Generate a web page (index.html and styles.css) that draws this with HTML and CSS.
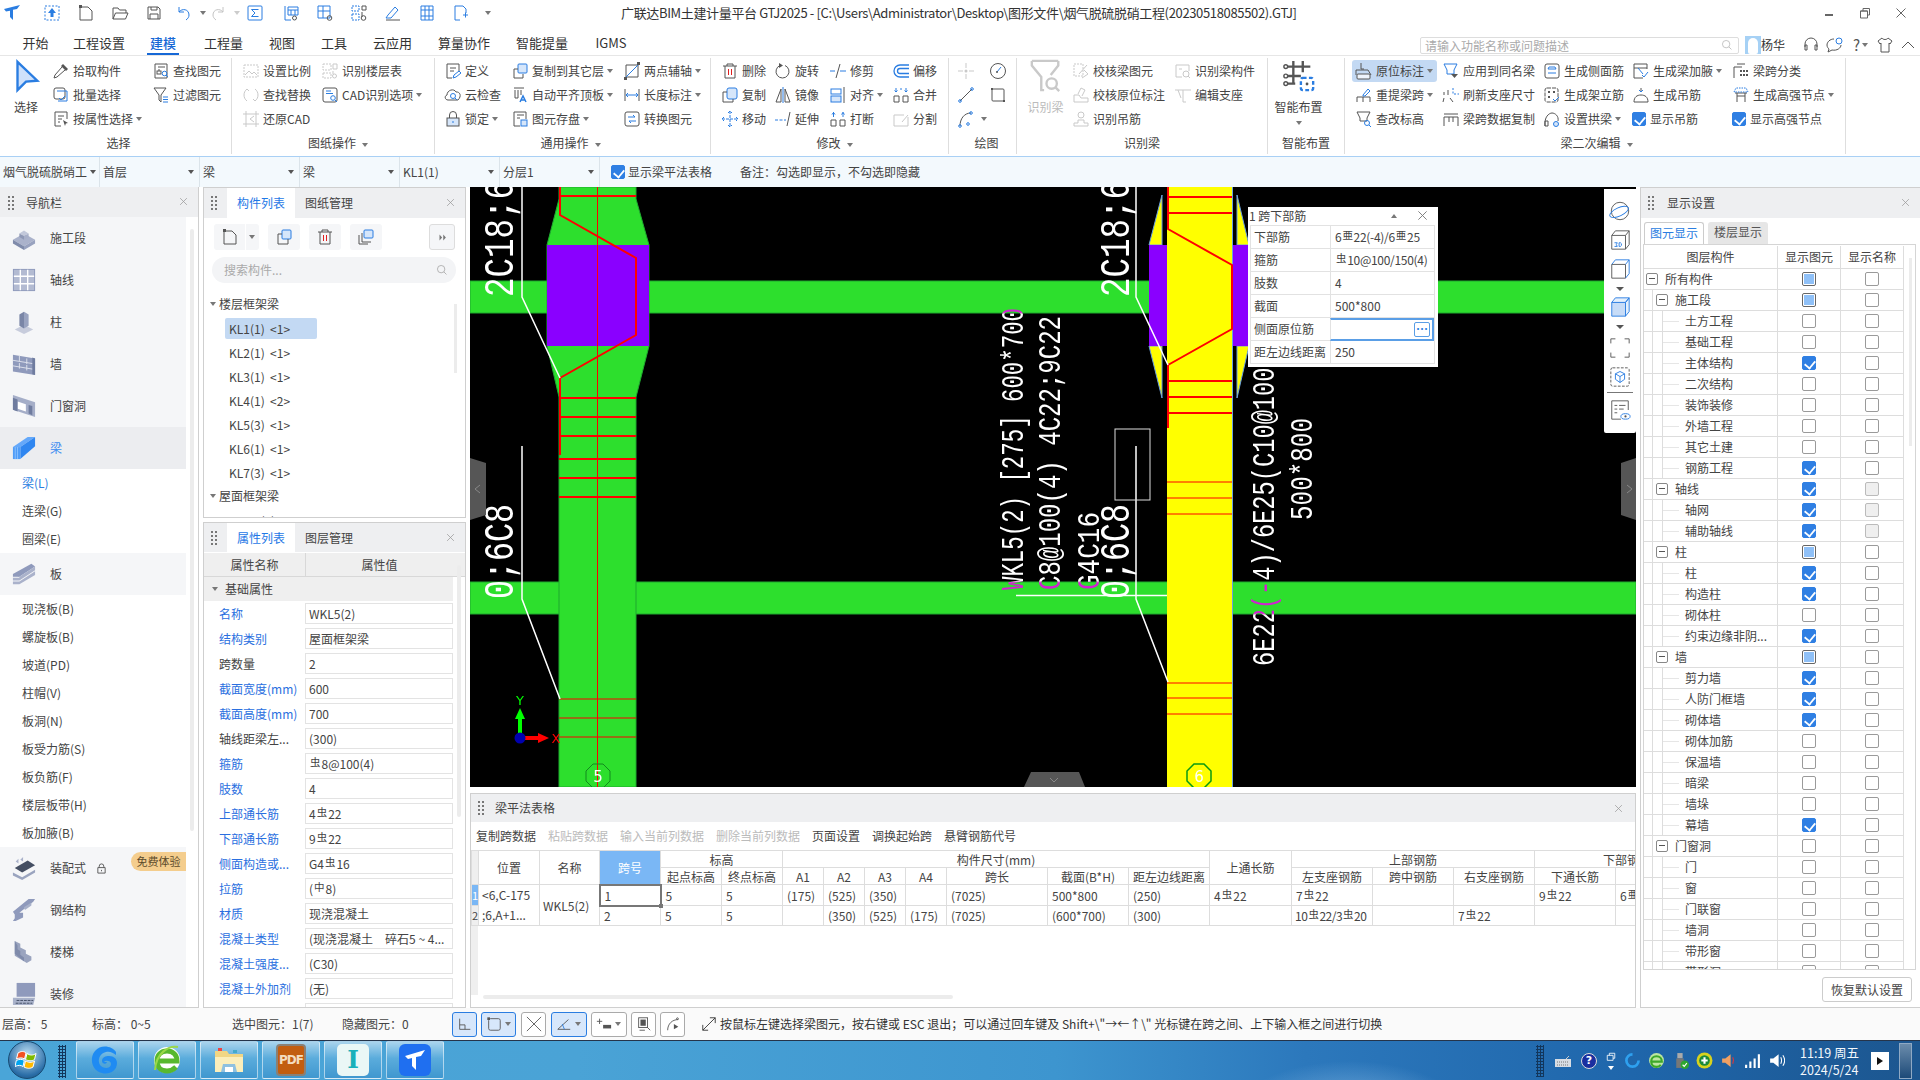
FILE: index.html
```html
<!DOCTYPE html>
<html lang="zh-CN">
<head>
<meta charset="utf-8">
<title>GTJ2025</title>
<link rel="stylesheet" href="styles.css">
</head>
<body>
<svg class="defs" width="0" height="0">
  <defs>
    <symbol id="x-close" viewBox="0 0 12 12"><path d="M1.5 1.5l9 9M10.5 1.5l-9 9"/></symbol>
    <symbol id="grip" viewBox="0 0 8 14"><path class="f" d="M1 0h2v2H1zM5 0h2v2H5zM1 4h2v2H1zM5 4h2v2H5zM1 8h2v2H1zM5 8h2v2H5zM1 12h2v2H1zM5 12h2v2H5z"/></symbol>
    <symbol id="mag" viewBox="0 0 14 14"><circle cx="6" cy="6" r="4.3"/><path d="M9.2 9.2l3 3"/></symbol>
    <symbol id="logo" viewBox="0 0 18 18"><path class="f" d="M1 5L17 1l-3 4-4 .7L10 16l-3-3V6.8L3 7.5z"/></symbol>
    <symbol id="imp" viewBox="0 0 18 18"><rect x="2" y="2" width="14" height="14" stroke-dasharray="2 1.5"/><path class="f" d="M9 4l4 5h-2.500v4h-3V9H5z"/></symbol>
    <symbol id="new" viewBox="0 0 18 18"><path stroke="#555" d="M3 3h8l4 4v9H3z"/><path class="f" fill="#2a7de1" stroke="none" d="M2 1h3v3H2z"/></symbol>
    <symbol id="open" viewBox="0 0 18 18"><path d="M2 15V4h5l1.500 2H15v3M2 15l2.500-6H17l-2.500 6z"/></symbol>
    <symbol id="save" viewBox="0 0 18 18"><path d="M3 3h10l2 2v10H3zM6 3v3h6V3M5 15v-5h8v5"/></symbol>
    <symbol id="undo" viewBox="0 0 18 18"><path d="M4 3v5h5M4 8c3-4 10-3 10 3 0 2-1 3.500-3 5"/></symbol>
    <symbol id="redo" viewBox="0 0 18 18"><path d="M14 3v5H9M14 8c-3-4-10-3-10 3 0 2 1 3.500 3 5"/></symbol>
    <symbol id="sigma" viewBox="0 0 18 18"><rect x="2" y="2" width="14" height="14" rx="1"/><path d="M12.500 5.500h-7L9 9l-3.500 3.500h7"/></symbol>
    <symbol id="tq" viewBox="0 0 18 18"><path stroke="#2a7de1" d="M3 2v14h6M6 3h10v8H6zM6 6h10M9 6v5M13 6v5"/><circle cx="12.500" cy="14" r="2" stroke="#555"/></symbol>
    <symbol id="gq" viewBox="0 0 18 18"><path stroke="#2a7de1" d="M2 2h12v12H2zM2 7h12M7 2v12"/><circle cx="13.500" cy="14" r="2.300" stroke="#555"/></symbol>
    <symbol id="gq2" viewBox="0 0 18 18"><path stroke="#2a7de1" stroke-dasharray="2 1" d="M2 2h7v5H2zM2 10h7v6H2z"/><path stroke="#555" d="M12 2h4v4h-4zM12 8v5"/><circle cx="13.500" cy="14" r="2.300" stroke="#555"/></symbol>
    <symbol id="pen" viewBox="0 0 18 18"><path stroke="#2a7de1" d="M4 11l7-8 3 3-7 8H2z"/><path stroke="#555" d="M2 16h14"/></symbol>
    <symbol id="film" viewBox="0 0 18 18"><path d="M3 2v14M15 2v14M3 6h12M3 12h12M7 2v14M11 2v14M3 2h12M3 16h12"/></symbol>
    <symbol id="crop" viewBox="0 0 18 18"><path stroke="#2a7de1" d="M3 2h8l3 3v4M3 2v14h5M11 11h5M13.500 8.500v5"/></symbol>
    <symbol id="pick" viewBox="0 0 18 18"><path class="f" fill="#555" stroke="none" d="M11 2l5 5-2 2-5-5z"/><path stroke="#555" d="M10 5l-7 8-1 3 3-1 8-7"/></symbol>
    <symbol id="batch" viewBox="0 0 18 18"><rect x="2" y="2" width="11" height="11" rx="2" stroke="#555"/><path stroke="#2a7de1" d="M5 5h10v10H6M7 12l2 2 4-4"/></symbol>
    <symbol id="psel" viewBox="0 0 18 18"><path stroke="#555" d="M15 9V2H3v14h6M6 6h6M6 9h4M6 12h2"/><path class="f" fill="#2a7de1" stroke="none" d="M11 10l5 3-2.200.6L13 16z"/></symbol>
    <symbol id="find" viewBox="0 0 18 18"><path stroke="#555" d="M3 2h12v14H3zM6 5h7M6 8h2"/><rect x="5" y="9" width="4" height="3" stroke="#555"/><circle cx="12.500" cy="11.500" r="2.300" stroke="#2a7de1"/><path stroke="#2a7de1" d="M14 13l2 2"/></symbol>
    <symbol id="filt" viewBox="0 0 18 18"><path stroke="#555" d="M2 2h12L9 9v7l-2-2V9z"/><path stroke="#2a7de1" d="M11 11h5M11 13.500h5M11 16h5"/></symbol>
    <symbol id="frame" viewBox="0 0 18 18"><path stroke-dasharray="2 1" d="M2 3h14v12H2z"/><path d="M3 13l4-4 3 3 2-2 3 3"/></symbol>
    <symbol id="ftb" viewBox="0 0 18 18"><path stroke-dasharray="2 1" d="M2 2h8v6H2zM2 11h8v5H2z"/><path d="M12 2h4v5h-4zM12 9v3"/><circle cx="13.500" cy="14" r="2"/></symbol>
    <symbol id="rep" viewBox="0 0 18 18"><path d="M5 3C1 6 1 12 5 15M13 3c4 3 4 9 0 12M5 3l2 2M13 15l-2-2"/></symbol>
    <symbol id="cad" viewBox="0 0 18 18"><rect x="2" y="2" width="14" height="14" rx="2" stroke="#555"/><path stroke="#2a7de1" d="M5 5h5M5 7.500h7"/><circle cx="12" cy="12" r="2.300" stroke="#2a7de1"/><path stroke="#2a7de1" d="M14 14l2 2"/></symbol>
    <symbol id="rest" viewBox="0 0 18 18"><path d="M4 1v16M14 1v16M1 4h16M1 14h16M12 6l-4 3 4 3"/></symbol>
    <symbol id="def" viewBox="0 0 18 18"><path stroke="#555" d="M3 2h12v8M3 2v14h5M6 6h6M6 9h4"/><path stroke="#2a7de1" d="M9 16l1-3 5-4 2 2-5 4z"/></symbol>
    <symbol id="cloud" viewBox="0 0 18 18"><path stroke="#555" d="M4 14c-3 0-4-4-1-5 0-5 7-7 9-3 4-.5 6 4 2 8z"/><circle cx="9" cy="10" r="2.500" stroke="#2a7de1"/><path stroke="#2a7de1" d="M11 12l2 2"/></symbol>
    <symbol id="lock" viewBox="0 0 18 18"><path stroke="#555" d="M5.500 8V5a3.500 3.500 0 017 0v3"/><rect x="3" y="8" width="12" height="8" stroke="#555" fill="#d6e6fa"/><path stroke="#2a7de1" d="M9 11v2"/></symbol>
    <symbol id="copy2" viewBox="0 0 18 18"><rect x="7" y="2" width="9" height="9" rx="1" stroke="#2a7de1" fill="#d6e6fa"/><path stroke="#555" d="M7 7H3v9h9v-4"/></symbol>
    <symbol id="atop" viewBox="0 0 18 18"><path stroke="#555" d="M3 2h10M4 4v8h3V4M10 4v5"/><path stroke="#2a7de1" stroke-width="1.500" d="M9 16l3-6 3 6M10 14h4"/></symbol>
    <symbol id="store" viewBox="0 0 18 18"><path stroke="#555" d="M3 2h12v7M3 2v14h6M6 5h7M6 8h3"/><rect x="10" y="10" width="6" height="6" stroke="#2a7de1" fill="#d6e6fa"/></symbol>
    <symbol id="two" viewBox="0 0 18 18"><path stroke="#555" d="M3 3h12v12H3z"/><path stroke="#2a7de1" d="M2 16L16 2"/><path class="f" fill="#2a7de1" stroke="none" d="M1 15h3v3H1zM14 0h3v3h-3z"/></symbol>
    <symbol id="dim" viewBox="0 0 18 18"><path stroke="#555" d="M2 3v12M16 3v12"/><path stroke="#2a7de1" d="M3 9h12M5 7L3 9l2 2M13 7l2 2-2 2"/></symbol>
    <symbol id="conv" viewBox="0 0 18 18"><rect x="2" y="2" width="14" height="14" rx="2" stroke="#555"/><path stroke="#2a7de1" d="M5 7h7l-2-2M13 11H6l2 2"/></symbol>
    <symbol id="del" viewBox="0 0 18 18"><path stroke="#555" d="M2 4h14M6 4V2h6v2M4 4v12h10V4"/><path stroke="#e02020" d="M7.500 7v6M10.500 7v6"/></symbol>
    <symbol id="rot" viewBox="0 0 18 18"><path stroke="#555" d="M11 3.500a6.500 6.500 0 11-5 0"/><path class="f" fill="#2a7de1" stroke="none" d="M5 1l4 2.500-4 2.500z"/></symbol>
    <symbol id="trim" viewBox="0 0 18 18"><path stroke="#2a7de1" d="M1 9h5M11 9h6"/><path stroke="#555" d="M11 2L7 16"/></symbol>
    <symbol id="off" viewBox="0 0 18 18"><path stroke="#2a7de1" stroke-width="1.300" d="M17 3H8a6 6 0 000 12h9M17 6.500H8a2.500 2.500 0 000 5h9"/></symbol>
    <symbol id="copy" viewBox="0 0 18 18"><rect x="6" y="2" width="10" height="11" rx="2" stroke="#2a7de1" fill="#d6e6fa"/><path stroke="#555" d="M6 6H2v10h10v-3"/></symbol>
    <symbol id="mir" viewBox="0 0 18 18"><path stroke="#555" d="M7 3L2 16h5zM11 3l5 13h-5z"/><path stroke="#2a7de1" d="M9 1v16"/></symbol>
    <symbol id="ali" viewBox="0 0 18 18"><rect x="2" y="3" width="10" height="5" stroke="#2a7de1"/><rect x="2" y="10" width="10" height="6" stroke="#2a7de1" fill="#d6e6fa"/><path stroke="#555" d="M15 1v16"/></symbol>
    <symbol id="merge" viewBox="0 0 18 18"><path stroke="#555" d="M2 10h5v6H2zM11 10h5v6h-5z"/><path stroke="#2a7de1" d="M4 2v4M4 6L2.500 4.500M4 6l1.500-1.500M14 2v4M14 6l-1.500-1.500M14 6l1.500-1.500M9 2v2"/></symbol>
    <symbol id="move" viewBox="0 0 18 18"><path stroke="#2a7de1" d="M9 1v16M1 9h16M7 3l2-2 2 2M7 15l2 2 2-2M3 7L1 9l2 2M15 7l2 2-2 2" stroke-dasharray="3 1"/></symbol>
    <symbol id="ext" viewBox="0 0 18 18"><path stroke="#2a7de1" stroke-dasharray="3 1.500" d="M1 10h11"/><path stroke="#555" d="M16 2l-3 14"/></symbol>
    <symbol id="brk" viewBox="0 0 18 18"><path stroke="#555" d="M2 10h5v6H2zM11 10h5v6h-5z"/><path stroke="#2a7de1" d="M4.500 2v5M14 2v5M3 4.500l1.500-2 1.500 2M12.500 4.500l1.500-2 1.500 2"/></symbol>
    <symbol id="spl" viewBox="0 0 18 18"><path d="M2 5h10M2 5v11h14V7M10 12l6-7"/></symbol>
    <symbol id="dpt" viewBox="0 0 18 18"><path d="M9 1v5M9 12v5M1 9h5M12 9h5"/><circle class="f" cx="9" cy="9" r="1.500"/></symbol>
    <symbol id="dcir" viewBox="0 0 18 18"><circle cx="9" cy="9" r="7.500" stroke="#555"/><path stroke="#2a7de1" d="M8 10l4-5"/><circle cx="8" cy="10" r="1" fill="#2a7de1" stroke="none" class="f"/></symbol>
    <symbol id="dlin" viewBox="0 0 18 18"><path stroke="#555" d="M3 15L15 3"/><circle cx="3" cy="15" r="1.300" stroke="#2a7de1"/><circle cx="15" cy="3" r="1.300" stroke="#2a7de1"/></symbol>
    <symbol id="drec" viewBox="0 0 18 18"><rect x="3" y="3" width="12" height="12" rx="1" stroke="#555"/><path class="f" fill="#2a7de1" stroke="none" d="M2 2h2v2H2zM14 14h2v2h-2z"/></symbol>
    <symbol id="darc" viewBox="0 0 18 18"><path stroke="#555" d="M3 16C3 9 7 3 14 3"/><circle cx="3" cy="16" r="1.300" stroke="#2a7de1"/><circle cx="11" cy="14" r="1.300" stroke="#2a7de1"/><circle cx="14" cy="3" r="1.300" stroke="#2a7de1"/></symbol>
    <symbol id="bigfilt" viewBox="0 0 36 36"><path stroke-width="2.500" d="M3 2h28M3 2v5l10 12v14h3M31 2v5l-8 10"/><circle cx="24" cy="26" r="5.500" stroke-width="2.500"/><path stroke-width="2.500" d="M28 30l4 4"/></symbol>
    <symbol id="chk1" viewBox="0 0 18 18"><path stroke-dasharray="2 1" d="M2 2h9v12H2z"/><path d="M7 12l8-9M12 8l4 4-6 4"/></symbol>
    <symbol id="chk2" viewBox="0 0 18 18"><path d="M2 16V9h5l2 3h7v4zM6 8l3-6 4 2-3 6"/></symbol>
    <symbol id="chk3" viewBox="0 0 18 18"><circle cx="9" cy="5" r="3"/><path d="M2 16v-3h4v-3h6v3h4v3z"/></symbol>
    <symbol id="chk4" viewBox="0 0 18 18"><path d="M2 3h13v6M2 3v12h6"/><circle cx="12" cy="12" r="3"/><path d="M14 14l2 2M5 7h3"/></symbol>
    <symbol id="chk5" viewBox="0 0 18 18"><path d="M1 4h16M9 4v12h3M4 4l3 8"/></symbol>
    <symbol id="smart" viewBox="0 0 36 36"><path stroke="#555" stroke-width="2.500" d="M12 2v24M22 2v12M2 8h28M2 18h18M2 26h12"/><circle cx="4" cy="8" r="2" stroke="#555" stroke-width="1.500" fill="#fff"/><circle cx="4" cy="18" r="2" stroke="#555" stroke-width="1.500" fill="#fff"/><circle cx="4" cy="26" r="2" stroke="#555" stroke-width="1.500" fill="#fff"/><rect x="20" y="20" width="13" height="13" rx="2" stroke="#2a7de1" stroke-width="2.500" stroke-dasharray="4 2.500"/><circle class="f" fill="#2a7de1" stroke="none" cx="26.500" cy="26.500" r="1.500"/></symbol>
    <symbol id="yw" viewBox="0 0 18 18"><path stroke="#555" d="M6 1v6h3"/><path stroke="#555" d="M1 13V8h12l3 5"/><rect x="2" y="12" width="13" height="5" rx="1" stroke="#555" fill="#eef4fc"/></symbol>
    <symbol id="tt" viewBox="0 0 18 18"><path stroke="#555" d="M2 16v-5h13v5M8 11v5"/><path stroke="#2a7de1" d="M8 9l5-6 2 2-5 5H8z"/></symbol>
    <symbol id="cg" viewBox="0 0 18 18"><path stroke="#555" d="M2 2h13l-3 6v3H5V8z"/><circle cx="12" cy="13" r="2.500" stroke="#2a7de1"/><path stroke="#2a7de1" d="M14 15l2 2"/></symbol>
    <symbol id="ap" viewBox="0 0 18 18"><path stroke="#2a7de1" d="M2 2h13l-3 6v4H5V8z"/><path class="f" fill="#2a7de1" stroke="none" d="M9 12h7l-3.500 4z"/></symbol>
    <symbol id="sx" viewBox="0 0 18 18"><path stroke="#555" d="M2 9V6M6 9V4M2 12l-1 4M8 12l3 4"/><path stroke="#2a7de1" stroke-dasharray="2 1.500" d="M11 2v6h6"/></symbol>
    <symbol id="spa" viewBox="0 0 18 18"><path stroke="#555" d="M2 16V7h14v9M7 7v5M11 7v5M2 4h14"/></symbol>
    <symbol id="sc" viewBox="0 0 18 18"><rect x="2" y="2" width="14" height="14" rx="2" stroke="#555"/><path stroke="#2a7de1" d="M5 7h8M5 7l1-2h6l1 2M5 11h8"/></symbol>
    <symbol id="sj" viewBox="0 0 18 18"><rect x="2" y="2" width="13" height="14" rx="2" stroke="#555" stroke-dasharray="4 1"/><path class="f" fill="#2a7de1" stroke="none" d="M5 5h2v2H5zM10 5h2v2h-2zM5 10h2v2H5z"/><path stroke="#2a7de1" d="M10 13l2 2 4-4"/></symbol>
    <symbol id="gb" viewBox="0 0 18 18"><path stroke="#555" d="M2 2v14h9M2 2h13v5M2 6h13"/><path stroke="#2a7de1" d="M6 6l5 6M10 13l2 2 4-5"/></symbol>
    <symbol id="gd" viewBox="0 0 18 18"><path stroke="#555" d="M2 16c0-5 3-7 7-7s7 2 7 7zM9 2v4"/><path stroke="#2a7de1" d="M7 4l2 2 2-2"/></symbol>
    <symbol id="ks" viewBox="0 0 18 18"><path stroke="#555" d="M2 16c-1-9 4-13 7-13s7 3 6 8"/><path stroke="#555" d="M2 11h3v5H2z"/><circle cx="13" cy="14" r="2.500" stroke="#2a7de1" fill="#d6e6fa"/></symbol>
    <symbol id="fl" viewBox="0 0 18 18"><path stroke="#555" d="M2 16V5h8"/><path stroke="#555" d="M5 2h8"/><path class="f" fill="#2a7de1" stroke="none" d="M8 8h2v2H8zM11 8h2v2h-2zM14 8h2v2h-2zM8 12h2v2H8zM11 12h2v2h-2zM14 12h2v2h-2z"/></symbol>
    <symbol id="gg" viewBox="0 0 18 18"><path stroke="#555" d="M3 7h12M5 7v9M13 7v9M5 10h8"/><path stroke="#2a7de1" stroke-dasharray="1.500 1" d="M2 6l2-4h10l2 4z"/></symbol>
    <symbol id="headset" viewBox="0 0 18 18"><path d="M3 11V8a6 6 0 0112 0v3M3 9h2v5H3zM13 9h2v5h-2z"/></symbol>
    <symbol id="chat" viewBox="0 0 18 18"><path d="M9 3C5 3 2 6 2 9c0 2 1 3 2 4l-1 3 4-2c5 1 9-2 9-5"/><circle cx="14" cy="5" r="3" stroke="#2a7de1"/></symbol>
    <symbol id="shirt" viewBox="0 0 18 18"><path d="M6 2L2 5l2 3 1-1v9h8V7l1 1 2-3-4-3c-1 2-5 2-6 0z"/></symbol>
    <symbol id="up" viewBox="0 0 18 18"><path d="M3 12l6-6 6 6"/></symbol>
    <symbol id="minw" viewBox="0 0 12 12"><path class="f" d="M2 7h8v2H2z"/></symbol>
    <symbol id="rest2" viewBox="0 0 12 12"><path d="M1.500 4h7v7h-7zM4 4V1.500h6.500v6.500H8.500M1.500 4h7"/></symbol>
    <symbol id="dup" viewBox="0 0 18 18"><rect x="7" y="2" width="9" height="9" rx="1" stroke="#2a7de1" fill="#d6e6fa"/><path stroke="#555" d="M7 6H3v10h10v-5"/></symbol>
    <symbol id="dup2" viewBox="0 0 18 18"><rect x="7" y="2" width="9" height="8" rx="1" stroke="#2a7de1" fill="#d6e6fa"/><path stroke="#555" d="M5 5v9h9M2 7v9h9"/></symbol>
    <symbol id="ffd" viewBox="0 0 12 12"><path class="f" d="M2 2l3.500 4L2 10zM7 2l3.500 4L7 10z"/></symbol>
    <symbol id="orbit" viewBox="0 0 24 24"><circle cx="12" cy="12" r="9.500" stroke="#555"/><ellipse cx="11" cy="13" rx="11" ry="4.500" transform="rotate(-25 11 13)" stroke="#2a7de1"/></symbol>
    <symbol id="box3" viewBox="0 0 24 24"><path stroke="#555" d="M3 7h15v15H3zM3 7l4-5h15l-4 5M18 22l4-5V2"/><path stroke="#2a7de1" d="M6 15h3l-1 2 1 2H6M11 15v4h1.500l1-1v-2l-1-1z"/></symbol>
    <symbol id="cube" viewBox="0 0 24 24"><path stroke="#555" d="M3 7h15v15H3z"/><path stroke="#2a7de1" d="M3 7l4-5h15l-4 5M18 22l4-5V2"/></symbol>
    <symbol id="cubef" viewBox="0 0 24 24"><path stroke="#2a7de1" fill="#c7dcf7" d="M3 7h15v15H3z"/><path stroke="#2a7de1" fill="#e5f0fc" d="M3 7l4-5h15l-4 5zM18 22l4-5V2l-4 5z"/></symbol>
    <symbol id="corners" viewBox="0 0 24 24"><path stroke="#555" d="M2 7V2h5M17 2h5v5M22 17v5h-5M7 22H2v-5"/></symbol>
    <symbol id="dcube" viewBox="0 0 24 24"><rect x="2" y="2" width="20" height="20" rx="2" stroke="#555" stroke-dasharray="3 1.500"/><path stroke="#2a7de1" d="M12 6l5 2.500v6L12 18l-5-3.500v-6zM7 8.500l5 3 5-3M12 11.500V18"/></symbol>
    <symbol id="leye" viewBox="0 0 24 24"><path stroke="#555" d="M21 12V2H3v20h10M6 7h3M11 7h7M6 11h3M11 11h5M6 15h3"/><ellipse cx="18" cy="19" rx="5" ry="3" stroke="#2a7de1"/><circle cx="18" cy="19" r="1.200" fill="#2a7de1" class="f" stroke="none"/></symbol>
    <symbol id="expand" viewBox="0 0 18 18"><path d="M2 16L16 2M10 2h6v6M2 10v6h6"/></symbol>
    <symbol id="nv1" viewBox="0 0 26 26"><path fill="#aab2cb" d="M1 15l12-7 12 7-12 7z"/><path fill="#7f8bab" d="M1 15v4l12 7v-4z"/><path fill="#98a2bf" d="M25 15v4l-12 7v-4z"/><path fill="#c2c8da" d="M8 8l5-3 5 3-5 3z"/><path fill="#8e98b5" d="M8 8v4l5 3v-4z"/><path fill="#a7afc8" d="M18 8v4l-5 3v-4z"/></symbol>
    <symbol id="nv2" viewBox="0 0 26 26"><rect x="1" y="1" width="24" height="24" fill="#8f9abc"/><rect x="2" y="2" width="22" height="22" fill="#b3bbd2"/><path stroke="#fff" stroke-width="1.500" fill="none" d="M9 2v22M17 2v22M2 9h22M2 17h22"/></symbol>
    <symbol id="nv3" viewBox="0 0 26 26"><path fill="#c7ccdc" d="M3 21l10-5 10 5-10 5z"/><path fill="#7a86a7" d="M8 5l5-3v18l-5-3z"/><path fill="#99a3c0" d="M18 5l-5-3v18l5-3z"/></symbol>
    <symbol id="nv4" viewBox="0 0 26 26"><path fill="#8f9abc" d="M1 3l24 4v18L1 21z"/><path stroke="#dfe3ee" fill="none" d="M1 9l24 4M1 15l24 4M8 4v6M16 7v6M8 12v6M16 14v6"/><path fill="#6f7c9f" d="M22 6l3 1v18l-3-1z"/></symbol>
    <symbol id="nv5" viewBox="0 0 26 26"><path fill="#a5aec8" d="M1 1l24 8v16L1 17z"/><path fill="#fff" d="M6 8l9 3v8l-9-3z"/><path fill="#6f7c9f" d="M6 6L1 4v13l5 2zM18 12l4 1v10l-4-2z"/></symbol>
    <symbol id="nv6" viewBox="0 0 26 26"><path fill="#64a8fa" d="M1 12L17 1h8L9 12z"/><path fill="#2f86f0" d="M9 12L25 1v10L9 25z"/><path fill="#4f9cf7" d="M1 12h8v13H1z"/><path stroke="#8cc1ff" d="M3.500 12v13M6 12v13" fill="none"/></symbol>
    <symbol id="nv7" viewBox="0 0 26 26"><path fill="#8f9abc" d="M1 13l20-11 4 3L8 16z"/><path fill="#8f9abc" d="M1 13h7v3H1z"/><path fill="#aab2cb" d="M1 17h7v3H1zM1 21h7v3H1zM8 16L25 5v4L8 20zM8 21L25 10v4L8 24z"/></symbol>
    <symbol id="nv8" viewBox="0 0 26 26"><path fill="#454f63" d="M3 13L17 5l8 5-14 8z"/><path fill="#9aa4bf" d="M1 18l10 5 14-8v3L11 26 1 21z"/><path fill="#aab2cb" d="M4 6l3-3v5zM9 4l3-3v5z"/></symbol>
    <symbol id="nv9" viewBox="0 0 26 26"><path fill="#8f9abc" d="M1 15L18 1h7l-2 3-15 12h4v5L4 25H1l2-3v-4z"/><path fill="#a8b1ca" d="M13 10l8-5v3L14 13z"/></symbol>
    <symbol id="nv10" viewBox="0 0 26 26"><path fill="#9aa4bf" d="M3 1l6 3v4l6 3v4l6 3v4l-5 3-13-8z"/><path fill="#7f8bab" d="M3 1v14l10 8V19l-4-3v-4l-3-2V6z"/></symbol>
    <symbol id="nv11" viewBox="0 0 26 26"><path fill="#8f9abc" d="M5 1h20v15H5z"/><path fill="#a9b2ca" d="M1 17h24l-2 8H1z"/><path stroke="#3f4a63" stroke-dasharray="3 1" fill="none" d="M5 20h18M4 23h18"/></symbol>
    <symbol id="smlock" viewBox="0 0 12 12"><path d="M3.500 5V3.500a2.500 2.500 0 015 0V5M2 5h8v6H2zM6 7.500v1.500"/></symbol>
    <symbol id="sb1" viewBox="0 0 18 18"><path d="M3 3v12h12M3 10h6v5"/></symbol>
    <symbol id="sb2" viewBox="0 0 18 18"><rect x="3" y="3" width="13" height="13" rx="2"/><rect x="1.500" y="1.500" width="3" height="3" class="f"/></symbol>
    <symbol id="sb3" viewBox="0 0 18 18"><path d="M1 1l16 16M17 1L1 17"/></symbol>
    <symbol id="sb4" viewBox="0 0 18 18"><path d="M2 15L14 4M2 15h14"/><path stroke="#2a7de1" d="M7 9l2.500 6"/></symbol>
    <symbol id="sb5" viewBox="0 0 18 18"><path d="M1 6h6M4 3v6"/><rect x="8" y="10" width="9" height="4" class="f"/></symbol>
    <symbol id="sb6" viewBox="0 0 18 18"><rect x="3" y="2" width="10" height="11"/><rect x="5" y="4" width="6" height="7" class="f"/><path d="M13 13l3 3M4 16h6"/></symbol>
    <symbol id="sb7" viewBox="0 0 18 18"><path d="M3 16c0-7 5-12 12-12"/><circle cx="14" cy="3" r="1"/><path class="f" d="M10 9l5 3-5 3z"/></symbol>
    <symbol id="tgear" viewBox="0 0 16 16"><path class="f" d="M8 1a7 7 0 107 7h-2.500a4.500 4.500 0 01-9 0 4.500 4.500 0 014.500-4.500z"/></symbol>
  </defs>
</svg>

<div class="app">
  <header class="titlebar">
    <div class="qa">
      <svg class="q-ic blue tl"><use href="#logo"/></svg>
      <svg class="q-ic blue"><use href="#imp"/></svg>
      <svg class="q-ic"><use href="#new"/></svg>
      <svg class="q-ic"><use href="#open"/></svg>
      <svg class="q-ic sv"><use href="#save"/></svg>
      <svg class="q-ic blue"><use href="#undo"/></svg><i class="caret"></i>
      <svg class="q-ic lite"><use href="#redo"/></svg><i class="caret lc"></i>
      <svg class="q-ic blue sg"><use href="#sigma"/></svg>
      <svg class="q-ic"><use href="#tq"/></svg>
      <svg class="q-ic"><use href="#gq"/></svg>
      <svg class="q-ic"><use href="#gq2"/></svg>
      <svg class="q-ic"><use href="#pen"/></svg>
      <svg class="q-ic blue"><use href="#film"/></svg>
      <svg class="q-ic"><use href="#crop"/></svg>
      <i class="caret ct"></i>
    </div>
    <div class="wintitle">广联达BIM土建计量平台 GTJ2025 - [C:\Users\Administrator\Desktop\图形文件\烟气脱硫脱硝工程(20230518085502).GTJ]</div>
    <div class="winbtns">
      <svg class="wb"><use href="#minw"/></svg>
      <svg class="wb"><use href="#rest2"/></svg>
      <svg class="wb"><use href="#x-close"/></svg>
    </div>
  </header>

  <nav class="tabs">
    <span class="tab t1">开始</span><span class="tab t2">工程设置</span><span class="tab t3 on">建模</span><span class="tab t4">工程量</span><span class="tab t5">视图</span><span class="tab t6">工具</span><span class="tab t7">云应用</span><span class="tab t8">算量协作</span><span class="tab t9">智能提量</span><span class="tab t10">IGMS</span>
    <div class="helpbox">
      <div class="searchbox"><span>请输入功能名称或问题描述</span><svg class="sm-mag"><use href="#mag"/></svg></div>
      <div class="avatar"><i></i></div><span class="uname">杨华</span>
      <svg class="hb-ic"><use href="#headset"/></svg>
      <svg class="hb-ic"><use href="#chat"/></svg>
      <span class="q">?</span><i class="caret"></i>
      <svg class="hb-ic"><use href="#shirt"/></svg>
      <svg class="hb-ic"><use href="#up"/></svg>
    </div>
  </nav>

  <section class="ribbon">
    <div class="grp g1">
      <div class="gb">
        <div class="col c-big"><svg class="bigic" viewBox="0 0 36 36"><path fill="#cfe1fb" stroke="#2a7de1" stroke-width="2.500" d="M9 3l21 20-12 1-9 9z"/></svg><span>选择</span></div>
        <div class="col c100">
          <div class="it"><svg class="ic"><use href="#pick"/></svg><span>拾取构件</span></div>
          <div class="it"><svg class="ic"><use href="#batch"/></svg><span>批量选择</span></div>
          <div class="it"><svg class="ic"><use href="#psel"/></svg><span>按属性选择</span><i class="caret"></i></div>
        </div>
        <div class="col">
          <div class="it"><svg class="ic"><use href="#find"/></svg><span>查找图元</span></div>
          <div class="it"><svg class="ic"><use href="#filt"/></svg><span>过滤图元</span></div>
        </div>
      </div>
      <div class="gl">选择</div>
    </div>
    <div class="grp g2">
      <div class="gb">
        <div class="col c79">
          <div class="it off"><svg class="ic"><use href="#frame"/></svg><span>设置比例</span></div>
          <div class="it off"><svg class="ic"><use href="#rep"/></svg><span>查找替换</span></div>
          <div class="it off"><svg class="ic"><use href="#rest"/></svg><span>还原CAD</span></div>
        </div>
        <div class="col">
          <div class="it off"><svg class="ic"><use href="#ftb"/></svg><span>识别楼层表</span></div>
          <div class="it"><svg class="ic"><use href="#cad"/></svg><span>CAD识别选项</span><i class="caret"></i></div>
        </div>
      </div>
      <div class="gl">图纸操作<i class="caret gc"></i></div>
    </div>
    <div class="grp g3">
      <div class="gb">
        <div class="col c67">
          <div class="it"><svg class="ic"><use href="#def"/></svg><span>定义</span></div>
          <div class="it"><svg class="ic"><use href="#cloud"/></svg><span>云检查</span></div>
          <div class="it"><svg class="ic"><use href="#lock"/></svg><span>锁定</span><i class="caret"></i></div>
        </div>
        <div class="col c112">
          <div class="it"><svg class="ic"><use href="#copy2"/></svg><span>复制到其它层</span><i class="caret"></i></div>
          <div class="it"><svg class="ic"><use href="#atop"/></svg><span>自动平齐顶板</span><i class="caret"></i></div>
          <div class="it"><svg class="ic"><use href="#store"/></svg><span>图元存盘</span><i class="caret"></i></div>
        </div>
        <div class="col">
          <div class="it"><svg class="ic"><use href="#two"/></svg><span>两点辅轴</span><i class="caret"></i></div>
          <div class="it"><svg class="ic"><use href="#dim"/></svg><span>长度标注</span><i class="caret"></i></div>
          <div class="it"><svg class="ic"><use href="#conv"/></svg><span>转换图元</span></div>
        </div>
      </div>
      <div class="gl">通用操作<i class="caret gc"></i></div>
    </div>
    <div class="grp g4">
      <div class="gb">
        <div class="col c53">
          <div class="it"><svg class="ic"><use href="#del"/></svg><span>删除</span></div>
          <div class="it"><svg class="ic"><use href="#copy"/></svg><span>复制</span></div>
          <div class="it"><svg class="ic"><use href="#move"/></svg><span>移动</span></div>
        </div>
        <div class="col c55">
          <div class="it"><svg class="ic"><use href="#rot"/></svg><span>旋转</span></div>
          <div class="it"><svg class="ic"><use href="#mir"/></svg><span>镜像</span></div>
          <div class="it"><svg class="ic"><use href="#ext"/></svg><span>延伸</span></div>
        </div>
        <div class="col c63">
          <div class="it"><svg class="ic"><use href="#trim"/></svg><span>修剪</span></div>
          <div class="it"><svg class="ic"><use href="#ali"/></svg><span>对齐</span><i class="caret"></i></div>
          <div class="it"><svg class="ic"><use href="#brk"/></svg><span>打断</span></div>
        </div>
        <div class="col">
          <div class="it"><svg class="ic"><use href="#off"/></svg><span>偏移</span></div>
          <div class="it"><svg class="ic"><use href="#merge"/></svg><span>合并</span></div>
          <div class="it off"><svg class="ic"><use href="#spl"/></svg><span>分割</span></div>
        </div>
      </div>
      <div class="gl">修改<i class="caret gc"></i></div>
    </div>
    <div class="grp g5">
      <div class="gb">
        <div class="col c32">
          <div class="it off"><svg class="ic"><use href="#dpt"/></svg></div>
          <div class="it"><svg class="ic"><use href="#dlin"/></svg></div>
          <div class="it"><svg class="ic"><use href="#darc"/></svg><i class="caret"></i></div>
        </div>
        <div class="col">
          <div class="it"><svg class="ic"><use href="#dcir"/></svg></div>
          <div class="it"><svg class="ic"><use href="#drec"/></svg></div>
        </div>
      </div>
      <div class="gl">绘图</div>
    </div>
    <div class="grp g6">
      <div class="gb">
        <div class="col c-big2 off"><svg class="bigic"><use href="#bigfilt"/></svg><span>识别梁</span></div>
        <div class="col c102">
          <div class="it off"><svg class="ic"><use href="#chk1"/></svg><span>校核梁图元</span></div>
          <div class="it off"><svg class="ic"><use href="#chk2"/></svg><span>校核原位标注</span></div>
          <div class="it off"><svg class="ic"><use href="#chk3"/></svg><span>识别吊筋</span></div>
        </div>
        <div class="col">
          <div class="it off"><svg class="ic"><use href="#chk4"/></svg><span>识别梁构件</span></div>
          <div class="it off"><svg class="ic"><use href="#chk5"/></svg><span>编辑支座</span></div>
        </div>
      </div>
      <div class="gl">识别梁</div>
    </div>
    <div class="grp g7">
      <div class="gb">
        <div class="col c-big3"><svg class="bigic"><use href="#smart"/></svg><span>智能布置</span><i class="caret cb2"></i></div>
      </div>
      <div class="gl">智能布置</div>
    </div>
    <div class="grp g8">
      <div class="gb">
        <div class="col c87">
          <div class="it sel"><svg class="ic"><use href="#yw"/></svg><span>原位标注</span><i class="caret"></i></div>
          <div class="it"><svg class="ic"><use href="#tt"/></svg><span>重提梁跨</span><i class="caret"></i></div>
          <div class="it"><svg class="ic"><use href="#cg"/></svg><span>查改标高</span></div>
        </div>
        <div class="col c101">
          <div class="it"><svg class="ic"><use href="#ap"/></svg><span>应用到同名梁</span></div>
          <div class="it"><svg class="ic"><use href="#sx"/></svg><span>刷新支座尺寸</span></div>
          <div class="it"><svg class="ic"><use href="#spa"/></svg><span>梁跨数据复制</span></div>
        </div>
        <div class="col c89">
          <div class="it"><svg class="ic"><use href="#sc"/></svg><span>生成侧面筋</span></div>
          <div class="it"><svg class="ic"><use href="#sj"/></svg><span>生成架立筋</span></div>
          <div class="it"><svg class="ic"><use href="#ks"/></svg><span>设置拱梁</span><i class="caret"></i></div>
        </div>
        <div class="col c100">
          <div class="it"><svg class="ic"><use href="#gb"/></svg><span>生成梁加腋</span><i class="caret"></i></div>
          <div class="it"><svg class="ic"><use href="#gd"/></svg><span>生成吊筋</span></div>
          <div class="it ck"><i class="cb on"></i><span>显示吊筋</span></div>
        </div>
        <div class="col">
          <div class="it"><svg class="ic"><use href="#fl"/></svg><span>梁跨分类</span></div>
          <div class="it"><svg class="ic"><use href="#gg"/></svg><span>生成高强节点</span><i class="caret"></i></div>
          <div class="it ck"><i class="cb on"></i><span>显示高强节点</span></div>
        </div>
      </div>
      <div class="gl">梁二次编辑<i class="caret gc"></i></div>
    </div>
  </section>

  <section class="ctxbar">
    <div class="dd dd1"><span>烟气脱硫脱硝工</span><i class="caret"></i></div>
    <div class="dd"><span>首层</span><i class="caret"></i></div>
    <div class="dd"><span>梁</span><i class="caret"></i></div>
    <div class="dd"><span>梁</span><i class="caret"></i></div>
    <div class="dd"><span>KL1(1)</span><i class="caret"></i></div>
    <div class="dd"><span>分层1</span><i class="caret"></i></div>
    <i class="cb on ctx-cb"></i><span>显示梁平法表格</span>
    <span class="note">备注：勾选即显示，不勾选即隐藏</span>
  </section>

  <main class="work">
    <aside class="panel nav">
      <div class="phead"><svg class="grip"><use href="#grip"/></svg><span class="ptitle">导航栏</span><svg class="px"><use href="#x-close"/></svg></div>
      <div class="navbody">
        <div class="navlist">
          <div class="ni"><svg class="ni-ic"><use href="#nv1"/></svg>施工段</div>
          <div class="ni"><svg class="ni-ic"><use href="#nv2"/></svg>轴线</div>
          <div class="ni"><svg class="ni-ic"><use href="#nv3"/></svg>柱</div>
          <div class="ni"><svg class="ni-ic"><use href="#nv4"/></svg>墙</div>
          <div class="ni"><svg class="ni-ic"><use href="#nv5"/></svg>门窗洞</div>
          <div class="ni act"><svg class="ni-ic"><use href="#nv6"/></svg>梁</div>
          <div class="si blue-t">梁(L)</div><div class="si">连梁(G)</div><div class="si">圈梁(E)</div>
          <div class="ni"><svg class="ni-ic"><use href="#nv7"/></svg>板</div>
          <div class="si">现浇板(B)</div><div class="si">螺旋板(B)</div><div class="si">坡道(PD)</div><div class="si">柱帽(V)</div><div class="si">板洞(N)</div><div class="si">板受力筋(S)</div><div class="si">板负筋(F)</div><div class="si">楼层板带(H)</div><div class="si">板加腋(B)</div>
          <div class="ni rel"><svg class="ni-ic"><use href="#nv8"/></svg>装配式<svg class="smlock"><use href="#smlock"/></svg><span class="badge">免费体验</span></div>
          <div class="ni"><svg class="ni-ic"><use href="#nv9"/></svg>钢结构</div>
          <div class="ni"><svg class="ni-ic"><use href="#nv10"/></svg>楼梯</div>
          <div class="ni"><svg class="ni-ic"><use href="#nv11"/></svg>装修</div>
        </div>
        <div class="vthumb"></div>
      </div>
    </aside>

    <div class="midcol">
      <section class="panel comp">
        <div class="phead"><svg class="grip"><use href="#grip"/></svg><span class="ptab on">构件列表</span><span class="ptab">图纸管理</span><svg class="px"><use href="#x-close"/></svg></div>
        <div class="ctools">
          <div class="tbtn tb-wide"><svg class="tb-ic"><use href="#new"/></svg><i class="tb-sep"><i class="caret"></i></i></div>
          <div class="tbtn"><svg class="tb-ic"><use href="#dup"/></svg></div>
          <div class="tbtn"><svg class="tb-ic"><use href="#del"/></svg></div>
          <div class="tbtn"><svg class="tb-ic"><use href="#dup2"/></svg></div>
          <div class="tbtn ff"><svg class="ff-ic"><use href="#ffd"/></svg></div>
        </div>
        <div class="csearch"><span>搜索构件...</span><svg class="cs-mag"><use href="#mag"/></svg></div>
        <div class="tree">
          <div class="tr-h"><i class="caret"></i>楼层框架梁</div>
          <div class="tr-i"><span class="sel">KL1(1)&nbsp; &lt;1&gt;</span></div>
          <div class="tr-i"><span>KL2(1)&nbsp; &lt;1&gt;</span></div>
          <div class="tr-i"><span>KL3(1)&nbsp; &lt;1&gt;</span></div>
          <div class="tr-i"><span>KL4(1)&nbsp; &lt;2&gt;</span></div>
          <div class="tr-i"><span>KL5(3)&nbsp; &lt;1&gt;</span></div>
          <div class="tr-i"><span>KL6(1)&nbsp; &lt;1&gt;</span></div>
          <div class="tr-i"><span>KL7(3)&nbsp; &lt;1&gt;</span></div>
          <div class="tr-h"><i class="caret"></i>屋面框架梁</div>
          <div class="tr-i"><span>WKL1(1)&nbsp; &lt;1&gt;</span></div>
          <div class="tree-thumb"></div>
        </div>
      </section>
      <section class="panel props">
        <div class="phead"><svg class="grip"><use href="#grip"/></svg><span class="ptab on">属性列表</span><span class="ptab">图层管理</span><svg class="px"><use href="#x-close"/></svg></div>
        <div class="pt-head"><span>属性名称</span><span>属性值</span></div>
        <div class="pt-group"><i class="caret"></i>基础属性</div>
        <div class="pr"><label class="lb">名称</label><div class="pv">WKL5(2)</div></div>
        <div class="pr"><label class="lb">结构类别</label><div class="pv">屋面框架梁</div></div>
        <div class="pr"><label>跨数量</label><div class="pv">2</div></div>
        <div class="pr"><label class="lb">截面宽度(mm)</label><div class="pv">600</div></div>
        <div class="pr"><label class="lb">截面高度(mm)</label><div class="pv">700</div></div>
        <div class="pr"><label>轴线距梁左...</label><div class="pv">(300)</div></div>
        <div class="pr"><label class="lb">箍筋</label><div class="pv"><sup class="rb">虫</sup>8@100(4)</div></div>
        <div class="pr"><label class="lb">肢数</label><div class="pv">4</div></div>
        <div class="pr"><label class="lb">上部通长筋</label><div class="pv">4<sup class="rb">虫</sup>22</div></div>
        <div class="pr"><label class="lb">下部通长筋</label><div class="pv">9<sup class="rb">虫</sup>22</div></div>
        <div class="pr"><label class="lb">侧面构造或...</label><div class="pv">G4<sup class="rb">虫</sup>16</div></div>
        <div class="pr"><label class="lb">拉筋</label><div class="pv">(<sup class="rb">中</sup>8)</div></div>
        <div class="pr"><label class="lb">材质</label><div class="pv">现浇混凝土</div></div>
        <div class="pr"><label class="lb">混凝土类型</label><div class="pv">(现浇混凝土　碎石5 ~ 4...</div></div>
        <div class="pr"><label class="lb">混凝土强度...</label><div class="pv">(C30)</div></div>
        <div class="pr"><label class="lb">混凝土外加剂</label><div class="pv">(无)</div></div>
        <div class="pr"><label></label><div class="pv"></div></div>
        <div class="props-thumb"></div>
      </section>
    </div>

    <div class="centercol">
      <section class="viewport">
        <svg class="cad" viewBox="470 187 1166 600" width="1166" height="600">
          <rect x="470" y="187" width="1166" height="600" fill="#000"/>
          <rect class="gr" x="470" y="281" width="1166" height="32"/>
          <rect class="gr" x="470" y="582" width="1166" height="32"/>
          <polygon class="gr" points="559,187 636,187 636,199 649,245 649,346 636,397 636,787 559,787 559,397 547,346 547,245 559,199"/>
          <rect fill="#8a00ff" x="547" y="245" width="102" height="101"/>
          <polyline class="red" points="560,187 560,215 636,258 636,335 560,378 560,455"/>
          <path class="red" d="M559 196h77M559 398h77M559 417h77M559 436h77M559 459h77M559 478h77M559 497h77"/>
          <path class="red thin" d="M559 699h77M559 718h77M559 737h77"/>
          <path class="red thin" d="M597.500 187v600"/>
          <polyline class="wh" points="522,187 522,297 560,378"/>
          <polyline class="wh" points="522,446 522,599 560,699"/>

          <polygon class="yl" points="1162,195 1162,245 1149,245"/>
          <polygon class="yl" points="1149,346 1162,346 1162,398"/>
          <polygon class="yl" points="1237,195 1249,245 1237,245"/>
          <polygon class="yl" points="1237,346 1249,346 1237,398"/>
          <rect fill="#8a00ff" x="1149" y="245" width="18" height="101"/>
          <rect fill="#8a00ff" x="1232" y="245" width="17" height="101"/>
          <rect fill="#ff0" x="1167" y="187" width="65" height="600"/>
          <path stroke="#6aa0e0" fill="none" d="M1232.500 187v600"/>
          <polyline class="red" points="1168,187 1168,229 1232,265 1232,329 1168,365 1168,428"/>
          <path class="red" d="M1167 197h65M1167 213h65M1167 381h65M1167 397h65M1167 413h65"/>
          <path class="red thin" d="M1167 482h65M1167 498h65M1167 514h65M1167 683h65M1167 698h65M1167 714h65"/>
          <polyline class="wh" points="1136,187 1136,297 1168,365"/>
          <polyline class="wh" points="1136,446 1136,599 1168,682"/>
          <path class="wh" d="M1016 595.500h151"/>
          <rect x="1115" y="429" width="35" height="71" fill="none" stroke="#ddd"/>

          <text class="c38" x="513" y="297" transform="rotate(-90 513 297)" textLength="156" lengthAdjust="spacingAndGlyphs">2C18;6C8</text>
          <text class="c38" x="513" y="599" transform="rotate(-90 513 599)" textLength="95" lengthAdjust="spacingAndGlyphs">0;6C8</text>
          <text class="c38" x="1129" y="297" transform="rotate(-90 1129 297)" textLength="156" lengthAdjust="spacingAndGlyphs">2C18;6C8</text>
          <text class="c29 xor" x="1023" y="590" transform="rotate(-90 1023 590)" textLength="282" lengthAdjust="spacingAndGlyphs">WKL5(2) [275] 600*700</text>
          <text class="c29 xor" x="1060" y="590" transform="rotate(-90 1060 590)" textLength="274" lengthAdjust="spacingAndGlyphs">C8@100(4) 4C22;9C22</text>
          <text class="c29 xor" x="1099" y="590" transform="rotate(-90 1099 590)" textLength="78" lengthAdjust="spacingAndGlyphs">G4C16</text>
          <text class="c38" x="1129" y="599" transform="rotate(-90 1129 599)" textLength="95" lengthAdjust="spacingAndGlyphs">0;6C8</text>
          <text class="c29 xor" x="1274" y="666" transform="rotate(-90 1274 666)" textLength="398" lengthAdjust="spacingAndGlyphs">6E22(-4)/6E25(C10@100/150(4)</text>
          <text class="c29" x="1312" y="520" transform="rotate(-90 1312 520)" textLength="102" lengthAdjust="spacingAndGlyphs">500*800</text>

          <polygon class="oct" points="593,764 603,764 610,771 610,781 603,788 593,788 586,781 586,771"/>
          <text class="axn" x="598" y="782">5</text>
          <polygon class="oct o2" points="1194,764 1204,764 1211,771 1211,781 1204,788 1194,788 1187,781 1187,771"/>
          <text class="axn y" x="1199" y="782">6</text>

          <path d="M520 737V716" stroke="#0f0" stroke-width="4"/>
          <polygon fill="#0f0" points="520,708 525,719 515,719"/>
          <path d="M520 738h20" stroke="#f00" stroke-width="4"/>
          <polygon fill="#f00" points="549,738 538,733 538,743"/>
          <circle cx="520" cy="738" r="5.500" fill="#0000b0"/>
          <text class="ax g" x="520" y="705">Y</text>
          <text class="ax r" x="556" y="743">X</text>

          <polygon class="hd" points="470,458 486,463 486,515 470,520"/>
          <path class="hdc" d="M480 485l-5 4 5 4"/>
          <polygon class="hd" points="1636,458 1621,463 1621,515 1636,520"/>
          <path class="hdc" d="M1627 485l5 4-5 4"/>
          <polygon class="hd" points="1031,772 1079,772 1085,787 1024,787"/>
          <path class="hdc" d="M1050 778l4 4 4-4"/>
        </svg>

        <div class="vtool">
          <svg class="vt"><use href="#orbit"/></svg>
          <svg class="vt"><use href="#box3"/></svg>
          <svg class="vt"><use href="#cube"/></svg><i class="caret vc"></i>
          <svg class="vt"><use href="#cubef"/></svg><i class="caret vc v2"></i>
          <svg class="vt"><use href="#corners"/></svg>
          <svg class="vt"><use href="#dcube"/></svg>
          <hr class="vs">
          <svg class="vt"><use href="#leye"/></svg>
        </div>

        <div class="popup">
          <div class="pop-t"><span>1 跨下部筋</span><i class="caret pu"></i><svg class="pop-x"><use href="#x-close"/></svg></div>
          <div class="pop-g">
            <span>下部筋</span><span class="tight">6<sup class="rb">亜</sup>22(-4)/6<sup class="rb">亜</sup>25</span>
            <span>箍筋</span><span class="tight"><sup class="rb">虫</sup>10@100/150(4)</span>
            <span>肢数</span><span>4</span>
            <span>截面</span><span>500*800</span>
            <span>侧面原位筋</span><span class="cell-act"><b class="dots">…</b></span>
            <span>距左边线距离</span><span>250</span>
          </div>
        </div>
      </section>

      <section class="panel beam">
        <div class="phead beam-h"><svg class="grip"><use href="#grip"/></svg><span class="ptitle">梁平法表格</span><svg class="px"><use href="#x-close"/></svg></div>
        <div class="beam-tools">
          <span>复制跨数据</span><span class="dis">粘贴跨数据</span><span class="dis">输入当前列数据</span><span class="dis">删除当前列数据</span><span>页面设置</span><span>调换起始跨</span><span>悬臂钢筋代号</span>
        </div>
        <div class="beam-wrap">
          <table class="bt">
            <colgroup><col class="c7"><col class="c61"><col class="c60"><col class="c61"><col class="c61"><col class="c61"><col class="c41"><col class="c41"><col class="c41"><col class="c41"><col class="c101"><col class="c81"><col class="c81"><col class="c82"><col class="c81"><col class="c81"><col class="c81"><col class="c81"><col class="c81"><col class="c81"></colgroup>
            <tr class="h1">
              <th rowspan="2" class="gut"></th><th rowspan="2">位置</th><th rowspan="2">名称</th><th rowspan="2" class="kh">跨号</th><th colspan="2">标高</th><th colspan="7">构件尺寸(mm)</th><th rowspan="2">上通长筋</th><th colspan="3">上部钢筋</th><th colspan="3" class="lowh">下部钢筋</th>
            </tr>
            <tr class="h2">
              <th>起点标高</th><th>终点标高</th><th>A1</th><th>A2</th><th>A3</th><th>A4</th><th>跨长</th><th>截面(B*H)</th><th>距左边线距离</th><th>左支座钢筋</th><th>跨中钢筋</th><th>右支座钢筋</th><th>下通长筋</th><th></th><th></th>
            </tr>
            <tr class="d1">
              <td class="gut g-on">1</td><td rowspan="2" class="pos">&lt;6,C-175<br>;6,A+1...</td><td rowspan="2" class="nm">WKL5(2)</td><td class="cur">1<i class="hdl"></i></td><td>5</td><td>5</td><td>(175)</td><td>(525)</td><td>(350)</td><td></td><td>(7025)</td><td>500*800</td><td>(250)</td><td>4<sup class="rb">虫</sup>22</td><td>7<sup class="rb">虫</sup>22</td><td></td><td></td><td>9<sup class="rb">虫</sup>22</td><td>6<sup class="rb">亜</sup>22</td><td></td>
            </tr>
            <tr class="d2">
              <td class="gut">2</td><td>2</td><td>5</td><td>5</td><td></td><td>(350)</td><td>(525)</td><td>(175)</td><td>(7025)</td><td>(600*700)</td><td>(300)</td><td></td><td class="tight">10<sup class="rb">虫</sup>22/3<sup class="rb">虫</sup>20</td><td></td><td>7<sup class="rb">虫</sup>22</td><td></td><td></td><td></td>
            </tr>
          </table>
          <div class="hthumb"></div>
        </div>
      </section>
    </div>

    <aside class="panel disp">
      <div class="phead"><svg class="grip"><use href="#grip"/></svg><span class="ptitle">显示设置</span><svg class="px"><use href="#x-close"/></svg></div>
      <div class="disp-tabs"><span class="dt on">图元显示</span><span class="dt">楼层显示</span></div>
      <div class="dtable">
        <div class="dh"><span>图层构件</span><span>显示图元</span><span>显示名称</span></div>
        <div class="dr l0"><span class="dn"><i class="mn"></i>所有构件</span><span class="dc"><i class="cb pa"></i></span><span class="dc"><i class="cb"></i></span></div>
        <div class="dr l1"><span class="dn"><i class="mn"></i>施工段</span><span class="dc"><i class="cb pa"></i></span><span class="dc"><i class="cb"></i></span></div>
        <div class="dr l2"><span class="dn">土方工程</span><span class="dc"><i class="cb"></i></span><span class="dc"><i class="cb"></i></span></div>
        <div class="dr l2"><span class="dn">基础工程</span><span class="dc"><i class="cb"></i></span><span class="dc"><i class="cb"></i></span></div>
        <div class="dr l2"><span class="dn">主体结构</span><span class="dc"><i class="cb on"></i></span><span class="dc"><i class="cb"></i></span></div>
        <div class="dr l2"><span class="dn">二次结构</span><span class="dc"><i class="cb"></i></span><span class="dc"><i class="cb"></i></span></div>
        <div class="dr l2"><span class="dn">装饰装修</span><span class="dc"><i class="cb"></i></span><span class="dc"><i class="cb"></i></span></div>
        <div class="dr l2"><span class="dn">外墙工程</span><span class="dc"><i class="cb"></i></span><span class="dc"><i class="cb"></i></span></div>
        <div class="dr l2"><span class="dn">其它土建</span><span class="dc"><i class="cb"></i></span><span class="dc"><i class="cb"></i></span></div>
        <div class="dr l2"><span class="dn">钢筋工程</span><span class="dc"><i class="cb on"></i></span><span class="dc"><i class="cb"></i></span></div>
        <div class="dr l1"><span class="dn"><i class="mn"></i>轴线</span><span class="dc"><i class="cb on"></i></span><span class="dc"><i class="cb gy"></i></span></div>
        <div class="dr l2"><span class="dn">轴网</span><span class="dc"><i class="cb on"></i></span><span class="dc"><i class="cb gy"></i></span></div>
        <div class="dr l2"><span class="dn">辅助轴线</span><span class="dc"><i class="cb on"></i></span><span class="dc"><i class="cb gy"></i></span></div>
        <div class="dr l1"><span class="dn"><i class="mn"></i>柱</span><span class="dc"><i class="cb pa"></i></span><span class="dc"><i class="cb"></i></span></div>
        <div class="dr l2"><span class="dn">柱</span><span class="dc"><i class="cb on"></i></span><span class="dc"><i class="cb"></i></span></div>
        <div class="dr l2"><span class="dn">构造柱</span><span class="dc"><i class="cb on"></i></span><span class="dc"><i class="cb"></i></span></div>
        <div class="dr l2"><span class="dn">砌体柱</span><span class="dc"><i class="cb"></i></span><span class="dc"><i class="cb"></i></span></div>
        <div class="dr l2"><span class="dn">约束边缘非阴...</span><span class="dc"><i class="cb on"></i></span><span class="dc"><i class="cb"></i></span></div>
        <div class="dr l1"><span class="dn"><i class="mn"></i>墙</span><span class="dc"><i class="cb pa"></i></span><span class="dc"><i class="cb"></i></span></div>
        <div class="dr l2"><span class="dn">剪力墙</span><span class="dc"><i class="cb on"></i></span><span class="dc"><i class="cb"></i></span></div>
        <div class="dr l2"><span class="dn">人防门框墙</span><span class="dc"><i class="cb on"></i></span><span class="dc"><i class="cb"></i></span></div>
        <div class="dr l2"><span class="dn">砌体墙</span><span class="dc"><i class="cb on"></i></span><span class="dc"><i class="cb"></i></span></div>
        <div class="dr l2"><span class="dn">砌体加筋</span><span class="dc"><i class="cb"></i></span><span class="dc"><i class="cb"></i></span></div>
        <div class="dr l2"><span class="dn">保温墙</span><span class="dc"><i class="cb"></i></span><span class="dc"><i class="cb"></i></span></div>
        <div class="dr l2"><span class="dn">暗梁</span><span class="dc"><i class="cb"></i></span><span class="dc"><i class="cb"></i></span></div>
        <div class="dr l2"><span class="dn">墙垛</span><span class="dc"><i class="cb"></i></span><span class="dc"><i class="cb"></i></span></div>
        <div class="dr l2"><span class="dn">幕墙</span><span class="dc"><i class="cb on"></i></span><span class="dc"><i class="cb"></i></span></div>
        <div class="dr l1"><span class="dn"><i class="mn"></i>门窗洞</span><span class="dc"><i class="cb"></i></span><span class="dc"><i class="cb"></i></span></div>
        <div class="dr l2"><span class="dn">门</span><span class="dc"><i class="cb"></i></span><span class="dc"><i class="cb"></i></span></div>
        <div class="dr l2"><span class="dn">窗</span><span class="dc"><i class="cb"></i></span><span class="dc"><i class="cb"></i></span></div>
        <div class="dr l2"><span class="dn">门联窗</span><span class="dc"><i class="cb"></i></span><span class="dc"><i class="cb"></i></span></div>
        <div class="dr l2"><span class="dn">墙洞</span><span class="dc"><i class="cb"></i></span><span class="dc"><i class="cb"></i></span></div>
        <div class="dr l2"><span class="dn">带形窗</span><span class="dc"><i class="cb"></i></span><span class="dc"><i class="cb"></i></span></div>
        <div class="dr l2"><span class="dn">带形洞</span><span class="dc"><i class="cb"></i></span><span class="dc"><i class="cb"></i></span></div>
        <div class="dthumb"></div>
      </div>
      <div class="disp-foot"><button class="reset">恢复默认设置</button></div>
    </aside>
  </main>

  <footer class="status">
    <span class="st1">层高： 5</span><span class="st2">标高： 0~5</span><span class="st3">选中图元：1(7)</span><span class="st4">隐藏图元：0</span>
    <div class="sbs">
      <span class="sb on w25"><svg><use href="#sb1"/></svg></span>
      <span class="sb on w35"><svg><use href="#sb2"/></svg><i class="caret"></i></span>
      <span class="sb w25 sb-x"><svg><use href="#sb3"/></svg></span>
      <span class="sb on w36"><svg><use href="#sb4"/></svg><i class="caret"></i></span>
      <span class="sb w36"><svg><use href="#sb5"/></svg><i class="caret"></i></span>
      <span class="sb w25"><svg><use href="#sb6"/></svg></span>
      <span class="sb w25"><svg><use href="#sb7"/></svg></span>
    </div>
    <svg class="st-exp"><use href="#expand"/></svg>
    <span class="st-msg">按鼠标左键选择梁图元，按右键或 ESC 退出；可以通过回车键及 Shift+\"→←↑\" 光标键在跨之间、上下输入框之间进行切换</span>
  </footer>

  <footer class="taskbar">
    <div class="orb"><svg viewBox="0 0 24 24" width="24" height="24"><path fill="#f25022" d="M3 5c3-2 6-2 8 0l-1.500 6c-2-1.500-5-1.500-8 0z"/><path fill="#7fba00" d="M12 5.500c3 2 6 2 9 0l-1.500 6c-3 2-6 1.500-9 0z"/><path fill="#00a4ef" d="M1.300 12.500c3-1.500 6-1.500 8 0L8 18.500c-2-1.500-5-1.500-8 0z"/><path fill="#ffb900" d="M10.500 13c3 1.500 6 2 9 0L18 19c-3 2-6 1.500-9 0z"/></svg></div>
    <div class="tgrip"></div>
    <div class="tbtns">
      <div class="tb"><svg class="tbi" viewBox="0 0 32 32"><path fill="#1f8bf2" d="M27 8C23 2 12 0 6 7 0 14 3 27 13 29c7 2 15-2 15-10 0-4-3-7-8-7-3 0-7 1-7 5 0 3 4 4 5 1h-3c1-2 7-2 7 2 0 5-8 5-11 1-3-5 0-12 6-13 4-1 7 1 10 3z"/></svg></div>
      <div class="tb"><svg class="tbi" viewBox="0 0 32 32"><circle cx="16" cy="16" r="13" fill="#fff"/><path fill="none" stroke="#58b82e" stroke-width="5" d="M6 17h20c0-6-4-10-10-10S6 11 6 17s4 10 10 10c4 0 7-2 9-4"/><path fill="none" stroke="#9bd84a" stroke-width="2" d="M27 3C18 1 5 9 4 26"/></svg></div>
      <div class="tb"><svg class="tbi" viewBox="0 0 32 32"><path fill="#f1d684" d="M2 7h12l2 3h14v18H2z"/><path fill="#fbeebb" d="M2 13h28v15H2z"/><path fill="#8fc1e0" d="M10 20h12l2 8H8z"/><path fill="#fff" d="M12 23h8v5h-8z"/><path fill="#e44" d="M5 4h4v3H5z"/><path fill="#4ac" d="M20 6h4v3h-4z"/></svg></div>
      <div class="tb"><span class="tbi-pdf">PDF</span></div>
      <div class="tb"><span class="tbi-i">I</span></div>
      <div class="tb"><svg class="tbi big" viewBox="0 0 32 32"><rect width="32" height="32" rx="6" fill="#1f6ff0"/><path fill="#fff" d="M6 12L26 6l-4 6-5 1v13l-4-4v-8l-4 1z"/></svg></div>
    </div>
    <div class="tspacer"></div>
    <div class="tray">
      <div class="tgrip"></div>
      <svg class="kbd" viewBox="0 0 18 14" width="18" height="14"><path fill="#d8dde3" d="M1 5h16v8H1z"/><path stroke="#777" fill="none" stroke-dasharray="1 1" d="M3 8h12M3 11h12"/><path stroke="#ccc" fill="none" d="M12 5l3-3"/></svg>
      <span class="thelp">?</span>
      <div class="trayw"><svg viewBox="0 0 12 12" width="12" height="10"><path stroke="#fff" fill="none" d="M1.500 4h7v6h-7zM4 4V1.500h6.500v6h-2"/></svg><i class="caret wc"></i></div>
      <svg class="tr" viewBox="0 0 16 16"><use href="#tgear" class="tg"/></svg>
      <svg class="tr" viewBox="0 0 16 16"><circle cx="8" cy="8" r="7" fill="#bde6a0"/><path fill="none" stroke="#3da82a" stroke-width="2" d="M3 9h10c0-3-2-5-5-5S3 6 3 9s2 5 5 5c2 0 3-.5 4-2"/></svg>
      <svg class="tr" viewBox="0 0 16 16"><path fill="#aaa" d="M5 1h5v5H5z"/><path fill="#777" d="M4 6h7v9H4z"/><circle cx="12" cy="12" r="4" fill="#2ea52e"/><path stroke="#fff" fill="none" d="M10 12l1.500 1.500 2.500-3"/></svg>
      <svg class="tr" viewBox="0 0 16 16"><circle cx="8" cy="8" r="7.500" fill="#d7d21e"/><circle cx="8" cy="8" r="5" fill="#1c8a3a"/><path stroke="#fff" stroke-width="2" d="M8 5v6M5 8h6"/></svg>
      <svg class="tr" viewBox="0 0 16 16"><path fill="#f0a063" d="M2 6h3l5-4v12l-5-4H2z"/><path fill="none" stroke="#e33" d="M12 5c1 2 1 4 0 6"/></svg>
      <svg class="tr" viewBox="0 0 16 16"><path fill="#fff" d="M1 12h2v3H1zM5 9h2v6H5zM9 6h2v9H9zM13 2h2v13h-2z"/></svg>
      <svg class="tr" viewBox="0 0 16 16"><path fill="#fff" d="M2 6h3l5-4v12l-5-4H2z"/><path fill="none" stroke="#fff" d="M12 5c1 2 1 4 0 6M14 3c2 3 2 7 0 10"/></svg>
      <div class="clock"><span>11:19 周五</span><span>2024/5/24</span></div>
      <div class="flag"><i></i></div>
      <div class="showd"></div>
    </div>
  </footer>
</div>
</body>
</html>
```
FILE: styles.css
```css
* { box-sizing: border-box; }
html, body { margin: 0; padding: 0; }
body { width: 1920px; height: 1080px; overflow: hidden; background: #fff; color: #444; font: 12px/18px "Noto Sans CJK SC", "Noto Sans", sans-serif; }
svg { fill: none; stroke: currentColor; stroke-width: 1; }
.f { fill: currentColor; stroke: none; }
.defs { position: absolute; }
i { font-style: normal; }
.app { width: 1920px; height: 1080px; display: flex; flex-direction: column; }
.caret { display: inline-block; width: 0; height: 0; border: 3px solid transparent; border-top: 4px solid #777; border-bottom: 0; flex: none; }

/* title bar */
.titlebar { height: 26px; display: flex; align-items: center; position: relative; flex: none; }
.qa { display: flex; align-items: center; width: 621px; padding-left: 3px; height: 26px; }
.q-ic { width: 18px; height: 18px; margin-right: 16px; color: #555; }
.q-ic.blue { color: #2a7de1; }
.q-ic.lite { color: #c4c4c4; }
.q-ic.tl { margin-right: 22px; }
.q-ic.sv { margin-right: 12px; }
.q-ic.sg { margin-right: 18px; }
.qa .caret { margin: 0 3px 0 -9px; }
.qa .caret.lc { border-top-color: #ccc; margin: 0 6px 0 -9px; }
.qa .ct { margin: 0 0 0 -1px; }
.wintitle { font-size: 13px; color: #333; white-space: nowrap; width: 680px; letter-spacing: -.35px; }
.winbtns { margin-left: auto; display: flex; gap: 24px; padding-right: 13px; color: #666; }
.wb { width: 12px; height: 12px; }

/* tabs */
.tabs { height: 30px; display: flex; align-items: flex-end; position: relative; flex: none; border-bottom: 1px solid #e6e6e6; font-size: 13px; }
.tab { height: 25px; line-height: 25px; color: #333; flex: none; text-align: center; }
.tab.on { color: #1668d6; font-weight: 500; border-bottom: 2px solid #1668d6; }
.t1 { margin-left: 22px; width: 27px; } .t2 { margin-left: 24px; width: 52px; } .t3 { margin-left: 22px; width: 32px; } .t4 { margin-left: 25px; width: 39px; }
.t5 { margin-left: 26px; width: 26px; } .t6 { margin-left: 26px; width: 26px; } .t7 { margin-left: 26px; width: 39px; } .t8 { margin-left: 26px; width: 52px; }
.t9 { margin-left: 26px; width: 52px; } .t10 { margin-left: 26px; width: 34px; }
.helpbox { position: absolute; left: 1420px; top: 6px; height: 26px; display: flex; align-items: center; width: 500px; }
.searchbox { width: 319px; height: 17px; border: 1px solid #ddd; border-radius: 2px; display: flex; align-items: center; justify-content: space-between; padding: 0 5px 0 4px; font-size: 12px; color: #aaa; line-height: 15px; }
.sm-mag { width: 12px; height: 12px; color: #bbb; }
.avatar { width: 16px; height: 18px; margin-left: 6px; background: #a6d1f5; position: relative; overflow: hidden; }
.avatar i { position: absolute; left: 3px; top: 2px; width: 10px; height: 16px; border-radius: 5px 5px 2px 2px; background: #fff; }
.uname { margin-left: 0; font-size: 12px; width: 24px; color: #333; white-space: nowrap; }
.hb-ic { width: 18px; height: 18px; margin-left: 17px; color: #555; }
.hb-ic:nth-of-type(n+2) { margin-left: 5px; }
.helpbox .hb-ic:first-of-type { margin-left: 17px; }
.q { margin-left: 10px; font-size: 15px; color: #555; }
.helpbox .caret { margin: 0 3px 0 2px; }

/* ribbon */
.ribbon { height: 100px; display: flex; flex: none; }
.grp { height: 96px; display: flex; flex-direction: column; border-right: 1px solid #dedede; flex: none; margin-top: 2px; }
.gb { height: 74px; display: flex; padding-top: 1px; }
.gl { height: 22px; line-height: 22px; text-align: center; color: #444; font-size: 12px; }
.gc { margin-left: 6px; vertical-align: middle; }
.g1 { width: 232px; } .g2 { width: 203px; padding-left: 10px; } .g3 { width: 276px; padding-left: 9px; } .g4 { width: 238px; padding-left: 10px; }
.g5 { width: 68px; padding-left: 8px; } .g6 { width: 251px; } .g7 { width: 77px; } .g8 { width: 501px; padding-left: 10px; }
.g1 .gl { padding-left: 6px; }
.g3 .gl { padding-right: 13px; }
.g8 .gl { padding-right: 7px; }
.col { display: flex; flex-direction: column; flex: none; }
.c100 { width: 100px; } .c79 { width: 79px; } .c67 { width: 67px; } .c112 { width: 112px; } .c53 { width: 53px; } .c55 { width: 55px; } .c63 { width: 63px; }
.c32 { width: 32px; } .c102 { width: 102px; } .c87 { width: 87px; } .c101 { width: 101px; } .c89 { width: 89px; }
.c-big, .c-big2, .c-big3 { align-items: center; }
.c-big { width: 52px; padding-top: 0; } .c-big2 { width: 57px; margin-right: -2px; } .c-big3 { width: 61px; }
.bigic { width: 34px; height: 34px; margin-bottom: 5px; color: #555; }
.c-big3 span { white-space: nowrap; }
.cb2 { margin-top: 5px; }
.off { color: #bbb; }
.off .ic, .off .bigic { color: #c9c9c9; }
.it { height: 24px; display: flex; align-items: center; white-space: nowrap; color: inherit; position: relative; }
.ic { width: 18px; height: 18px; margin-right: 3px; flex: none; color: #555; }
.it .caret { margin-left: 3px; }
.it.sel { background: #c3d9f3; border-radius: 3px; margin: 1px 2px 1px -3px; height: 22px; padding-left: 3px; width: 85px; }
.it.ck { padding-left: 0; }
.g8 .it.ck .cb { margin-right: 4px; }

/* context bar */
.ctxbar { height: 31px; flex: none; background: #f3f9fd; border-top: 1px solid #a9d0f5; display: flex; align-items: center; color: #444; }
.dd { width: 100px; height: 30px; border-right: 1px solid #dbe4ea; display: flex; align-items: center; justify-content: space-between; padding: 0 5px 0 3px; flex: none; }
.dd1 { padding-right: 3px; }
.dd1 span { white-space: nowrap; }
.dd .caret { border-top-color: #555; }
.ctx-cb { margin: 0 3px 0 11px; }
.note { margin-left: 28px; }

/* checkbox */
.cb { display: inline-block; width: 14px; height: 14px; border: 1px solid #9a9a9a; border-radius: 2px; background: #fff; position: relative; flex: none; }
.cb.on { background: #2f7fe3; border-color: #2f7fe3; }
.cb.on::after { content: ""; position: absolute; left: 3px; top: 1px; width: 6px; height: 9px; border: solid #fff; border-width: 0 2px 2px 0; transform: rotate(40deg) scale(.9); }
.cb.pa { border-color: #666; }
.cb.pa::after { content: ""; position: absolute; inset: 1px; background: #8fc0f7; }
.cb.gy { background: #efefef; border-color: #bbb; }

/* workspace */
.work { height: 821px; display: flex; flex: none; }
.panel { background: #fff; border: 1px solid #cfcfcf; overflow: hidden; position: relative; }
.phead { height: 30px; background: #eeeff1; display: flex; align-items: center; position: relative; flex: none; color: #444; }
.grip { width: 8px; height: 14px; margin-left: 6px; color: #777; flex: none; }
.ptitle { margin-left: 12px; color: #444; }
.px { width: 9px; height: 9px; color: #999; position: absolute; right: 10px; top: 10px; }
.ptab { height: 30px; line-height: 30px; color: #444; flex: none; margin-left: 10px; }
.ptab.on { background: #fff; color: #1f78e6; width: 68px; text-align: center; margin-left: 9px; }
.ptab + .ptab { margin-left: 10px; }

.nav { width: 199px; border-width: 0 1px 1px 0; flex: none; }
.nav .phead { padding-top: 1px; }
.nav .grip { margin-left: 7px; }
.nav .ptitle { margin-left: 11px; }
.navbody { display: flex; height: 790px; overflow: hidden; }
.navlist { width: 186px; flex: none; }
.ni { height: 42px; background: #f5f6f8; display: flex; align-items: center; padding-left: 12px; color: #444; position: relative; }
.ni.act { background: #ecedf0; color: #3b8bf0; }
.ni-ic { width: 24px; height: 24px; margin-right: 14px; stroke: none; flex: none; }
.si { height: 28px; line-height: 28px; padding-left: 22px; background: #fff; color: #444; }
.blue-t { color: #2a7de1; }
.smlock { width: 11px; height: 11px; margin-left: 10px; color: #555; }
.badge { position: absolute; right: 0; top: 5px; width: 55px; height: 19px; line-height: 19px; background: #f4cd8d; border-radius: 10px 0 0 10px; text-align: center; font-size: 11px; color: #5b4a2a; }
.vthumb { width: 4px; height: 602px; margin: 12px 0 0 4px; background: #ececec; border-radius: 2px; flex: none; }

.midcol { width: 263px; margin-left: 4px; display: flex; flex-direction: column; gap: 4px; flex: none; }
.comp { height: 331px; flex: none; }
.ctools { display: flex; gap: 9px; padding: 6px 10px 0; height: 32px; }
.tbtn { width: 32px; height: 26px; background: #f5f6f8; border-radius: 3px; display: flex; align-items: center; justify-content: center; }
.tb-wide { width: 45px; justify-content: flex-start; padding-left: 7px; }
.tb-sep { border-left: 1px solid #fff; height: 26px; margin-left: 6px; padding-left: 3px; display: flex; align-items: center; }
.tb-ic { width: 18px; height: 18px; color: #555; }
.ff { margin-left: auto; width: 26px; border: 1px solid #ddd; }
.ff-ic { width: 9px; height: 9px; color: #777; }
.csearch { margin: 7px 9px 0 8px; height: 26px; border-radius: 13px; background: #f3f4f6; display: flex; align-items: center; justify-content: space-between; padding: 0 8px 0 12px; color: #aaa; }
.cs-mag { width: 12px; height: 12px; color: #aaa; }
.tree { position: relative; margin-top: 9px; }
.tr-h { height: 24px; line-height: 24px; padding-left: 6px; color: #444; display: flex; align-items: center; }
.tr-h .caret { margin-right: 3px; }
.tr-i { height: 24px; display: flex; align-items: center; padding-left: 21px; white-space: nowrap; color: #444; }
.tr-i span { height: 21px; line-height: 21px; padding: 0 4px; width: 92px; }
.tr-i .sel { background: #c3d9f3; border-radius: 2px; }
.tree-thumb { position: absolute; right: 8px; top: 12px; width: 3px; height: 69px; background: #ececec; }

.props { height: 486px; flex: none; }
.props .phead { height: 29px; }
.pt-head { margin-top: 1px; display: grid; grid-template-columns: 101px 148px; height: 24px; background: #efefef; border-bottom: 1px solid #d8d8d8; text-align: center; line-height: 23px; }
.pt-head span + span { border-left: 1px solid #d8d8d8; }
.pt-group { width: 249px; height: 24px; background: #efefef; display: flex; align-items: center; padding-left: 8px; }
.pt-group .caret { margin-right: 7px; }
.pr { display: grid; grid-template-columns: 101px 148px; height: 25px; align-items: center; }
.pr label { padding-left: 15px; white-space: nowrap; color: #444; }
.pr label.lb { color: #2a6fe0; }
.pv { height: 21px; line-height: 19px; border: 1px solid #e3e3e3; padding-left: 3px; white-space: nowrap; overflow: hidden; color: #444; }
.rb { font-size: 10.500px; line-height: 0; vertical-align: 3px; margin: 0 1px; }
.props-thumb { position: absolute; right: 4px; top: 42px; width: 4px; height: 252px; background: #ececec; border-radius: 2px; }

.centercol { width: 1166px; margin-left: 4px; display: flex; flex-direction: column; gap: 6px; flex: none; }
.viewport { height: 600px; position: relative; overflow: hidden; background: #000; flex: none; }
.cad { display: block; isolation: isolate; stroke: none; }
.gr { fill: #2ddf2d; stroke: #1fa92f; stroke-width: 1; }
.red { fill: none; stroke: #f00; stroke-width: 2; }
.red.thin { stroke-width: 1; }
.wh { fill: none; stroke: #fff; stroke-width: 1.500; }
.yl { fill: #ff0; stroke: #6aa0e0; stroke-width: 1; }
.c38, .c29 { font-family: "Liberation Mono", monospace; fill: #fff; stroke: none; }
.c38 { font-size: 42px; }
.c29 { font-size: 31px; }
.xor { mix-blend-mode: difference; }
.oct { fill: none; stroke: #128a1e; stroke-width: 1; }
.oct.o2 { stroke: #0a9a12; stroke-width: 1.500; }
.axn { font-family: "DejaVu Sans", sans-serif; font-size: 15px; fill: #fff; text-anchor: middle; stroke: none; }
.ax { font-family: "DejaVu Sans", sans-serif; font-size: 13px; text-anchor: middle; stroke: none; }
.ax.g { fill: #0f0; }
.ax.r { fill: #f00; }
.hd { fill: #565656; }
.hdc { fill: none; stroke: #888; }

.vtool { position: absolute; right: 0; top: 2px; width: 32px; height: 244px; background: #fff; border-radius: 0 0 2px 2px; display: flex; flex-direction: column; align-items: center; padding-top: 11px; }
.vt { width: 22px; height: 22px; flex: none; margin-bottom: 7px; color: #555; }
.vc { margin: 0 0 5px; border-top-color: #555; border-width: 4px; border-bottom: 0; }
.vc.v2 { margin-bottom: 8px; }
.vs { width: 26px; height: 0; border: 0; border-top: 1px solid #777; margin: -3px 0 6px; flex: none; }

.popup { position: absolute; left: 778px; top: 20px; width: 190px; height: 160px; background: #fff; padding: 0 3px 0 2px; }
.pop-t { height: 18px; display: flex; align-items: center; position: relative; color: #444; }
.pop-t span { margin-left: -1px; }
.pu { position: absolute; right: 38px; top: 7px; border: 3px solid transparent; border-bottom: 4px solid #777; border-top: 0; }
.pop-x { position: absolute; right: 7px; top: 3px; width: 11px; height: 11px; color: #777; }
.pop-g { display: grid; grid-template-columns: 79px 104px; grid-auto-rows: 23px; border: 1px solid #e2e2e2; border-bottom: 0; }
.pop-g span { line-height: 22px; padding-left: 3px; border-bottom: 1px solid #e2e2e2; white-space: nowrap; overflow: hidden; color: #444; }
.pop-g span:nth-child(even) { border-left: 1px solid #e2e2e2; padding-left: 4px; }
.pop-g .tight { letter-spacing: -.3px; }
.pop-g .cell-act { border: 2px solid #5a9ee6; position: relative; }
.dots { position: absolute; right: 2px; top: 2px; width: 16px; height: 15px; border: 1px solid #5a9ee6; border-radius: 2px; line-height: 11px; text-align: center; color: #2a7de1; font-size: 12px; font-weight: 700; }

.beam { height: 215px; flex: none; }
.beam-h { height: 28px; }
.beam-h .ptitle { margin-left: 10px; }
.beam-h .px { right: 12px; }
.beam-tools { height: 28px; display: flex; gap: 12px; padding-left: 5px; align-items: center; white-space: nowrap; color: #444; }
.beam-tools .dis { color: #bbb; }
.beam-wrap { height: 157px; position: relative; overflow: hidden; background: linear-gradient(#efefef, #efefef) 0 0/7px 145px no-repeat; }
.bt { border-collapse: collapse; table-layout: fixed; width: 1306px; background: #fff; }
.c7 { width: 7px; } .c41 { width: 41px; } .c60 { width: 60px; } .c61 { width: 61px; } .c81 { width: 81px; } .c82 { width: 82px; } .bt .c101 { width: 101px; }
.bt th, .bt td { border: 1px solid #ddd; font-weight: 400; padding: 0; white-space: nowrap; overflow: hidden; color: #444; }
.bt th { text-align: center; line-height: 15px; }
.h1 th, .h2 th { height: 17px; }
.bt .kh { background: #7ab7f5; color: #fff; }
.bt td { padding-left: 4px; line-height: 17px; }
.d1 td { height: 21px; }
.d2 td { height: 20px; }
.bt .gut { padding: 0; text-align: center; background: #efefef; font-size: 11px; }
.bt .g-on { background: #7ab7f5; color: #fff; }
.bt .cur { border: 2px solid #777; position: relative; overflow: visible; }
.hdl { position: absolute; right: -3px; bottom: -3px; width: 4px; height: 4px; background: #777; }
.bt .pos { line-height: 20px; padding-left: 3px; }
.bt .nm { padding-left: 3px; }
.bt .tight { letter-spacing: -.5px; padding-left: 3px; }
.bt .lowh { text-align: left; padding-left: 68px; }
.hthumb { position: absolute; left: 12px; top: 145px; width: 470px; height: 4px; background: #ececec; border-radius: 2px; }

.disp { width: 280px; margin-left: 4px; flex: none; border-right: 0; }
.disp .ptitle { margin-left: 12px; }
.disp .px { right: 10px; }
.disp-tabs { display: flex; gap: 4px; padding: 4px 0 0 3px; height: 26px; }
.dt { width: 60px; height: 22px; line-height: 20px; text-align: center; background: #e6e6e6; border-radius: 3px 3px 0 0; color: #555; }
.dt.on { background: #fff; border: 1px solid #ccc; border-bottom: 0; color: #2a7de1; }
.dtable { margin-left: 2px; width: 273px; height: 726px; border: 1px solid #d5d5d5; overflow: hidden; position: relative; }
.dh { display: grid; grid-template-columns: 133px 63px 63px; height: 23px; line-height: 22px; text-align: center; border-bottom: 1px solid #ddd; border-right: 1px solid #ddd; width: 260px; margin-top: 1px; }
.dh span + span, .dc { border-left: 1px solid #ddd; }
.dr { display: grid; grid-template-columns: 133px 63px 63px; height: 21px; border-bottom: 1px solid #ddd; border-right: 1px solid #ddd; width: 260px; }
.dn { line-height: 20px; white-space: nowrap; color: #444; display: flex; align-items: center; }
.dc { display: flex; align-items: center; justify-content: center; }
.mn { width: 12px; height: 12px; border: 1px solid #888; border-radius: 2px; position: relative; margin-right: 7px; flex: none; }
.mn::after { content: ""; position: absolute; left: 2px; right: 2px; top: 4px; height: 1px; background: #555; }
.l0 .dn { padding-left: 2px; }
.l1 .dn { padding-left: 12px; background: linear-gradient(#ddd, #ddd) 8px 0/1px 100% no-repeat; }
.l2 .dn { padding-left: 41px; background: linear-gradient(#ddd, #ddd) 8px 0/1px 100% no-repeat, linear-gradient(#ddd, #ddd) 18px 0/1px 100% no-repeat, linear-gradient(#e6e6e6, #e6e6e6) 19px 10px/16px 1px no-repeat; }
.dthumb { position: absolute; right: 3px; top: 13px; width: 3px; height: 188px; background: #ececec; }
.disp-foot { display: flex; justify-content: flex-end; padding: 7px 8px 0 0; }
.reset { width: 90px; height: 25px; background: #fff; border: 1px solid #ccc; border-radius: 3px; font: inherit; color: #444; padding: 0; }

/* status */
.status { height: 32px; background: #fafafa; display: flex; align-items: center; flex: none; white-space: nowrap; color: #444; }
.st1 { margin-left: 2px; width: 90px; } .st2 { width: 140px; } .st3 { width: 110px; } .st4 { width: 110px; }
.sbs { display: flex; gap: 4px; align-items: center; margin-left: 0; }
.sb { height: 25px; border: 1px solid #aaa; border-radius: 3px; display: flex; align-items: center; padding-left: 4px; background: #fff; color: #555; gap: 3px; }
.sb svg { width: 16px; height: 16px; }
.sb.on { background: #d7e7fb; border-color: #2a7de1; }
.w25 { width: 25px; }
.w35 { width: 35px; }
.w36 { width: 36px; }
.sb-x { margin: 0 1px; }
.st-exp { width: 16px; height: 16px; margin: 0 3px 0 16px; color: #333; }
.st-msg { color: #333; }

/* taskbar */
.taskbar { height: 40px; flex: none; display: flex; align-items: stretch; border-top: 1px solid #25344a; background: radial-gradient(ellipse 120px 60px at 1350px 80px, rgba(160, 205, 240, .75), rgba(160, 205, 240, 0) 100%), linear-gradient(90deg, #4aa5d8 0, #4aa3d6 30%, #3d95cf 55%, #2c78bc 68%, #1f66ab 85%, #1c568f 100%); color: #fff; }
.orb { width: 38px; height: 38px; margin: 0 0 0 8px; border-radius: 50%; background: radial-gradient(circle at 50% 35%, #bfe0f5, #2b6ea8 70%, #14456f); display: flex; align-items: center; justify-content: center; border: 1px solid #174a72; flex: none; }
.tgrip { width: 8px; margin: 4px 4px 2px 12px; background-image: radial-gradient(#12365c 1px, transparent 1.200px); background-size: 3px 3px; flex: none; }
.tbtns { display: flex; gap: 4px; margin-left: 6px; }
.tb { width: 58px; height: 38px; border: 1px solid rgba(255, 255, 255, .55); border-radius: 2px; background: linear-gradient(#a9d4ed, #5bacdc 45%, #3f97cf); display: flex; align-items: center; justify-content: center; }
.tbi { width: 32px; height: 32px; stroke: none; }
.tbi-pdf { width: 30px; height: 32px; background: #c25d10; border: 2px solid #8a8076; border-radius: 4px; font: 700 12px/28px "DejaVu Sans", sans-serif; color: #f4dcc0; text-align: center; letter-spacing: -1px; }
.tbi-i { width: 32px; height: 32px; background: #eaf7f6; border-radius: 5px; font: 700 25px/32px "DejaVu Serif", serif; color: #19b0ba; text-align: center; }
.tspacer { flex: 1; }
.tray { display: flex; align-items: center; width: 384px; padding-left: 0; }
.tray .tgrip { height: 32px; margin: 0 10px 0 0; }
.kbd { margin-right: 9px; stroke: none; }
.thelp { width: 16px; height: 16px; border-radius: 50%; background: #1a2fa0; border: 1px solid #ddd; color: #fff; text-align: center; font: 700 11px/14px "DejaVu Sans", sans-serif; margin-right: 8px; }
.trayw { width: 12px; display: flex; flex-direction: column; align-items: center; gap: 4px; margin-right: 7px; }
.wc { border-top-color: #fff; }
.tr { width: 17px; height: 17px; margin-right: 7px; stroke: none; flex: none; }
.tg { color: #2ea0ef; }
.clock { display: flex; flex-direction: column; width: 64px; margin-left: 8px; font-size: 12.500px; line-height: 17px; white-space: nowrap; color: #f4f8fc; }
.flag { width: 18px; height: 18px; background: #fff; display: flex; align-items: center; justify-content: center; margin-left: 7px; flex: none; }
.flag i { width: 0; height: 0; border-left: 6px solid #111; border-top: 4px solid transparent; border-bottom: 4px solid transparent; }
.showd { width: 13px; height: 36px; margin-left: 10px; border: 1px solid #8fa9c4; background: linear-gradient(#6b8cab, #1d4a78); flex: none; }
```
